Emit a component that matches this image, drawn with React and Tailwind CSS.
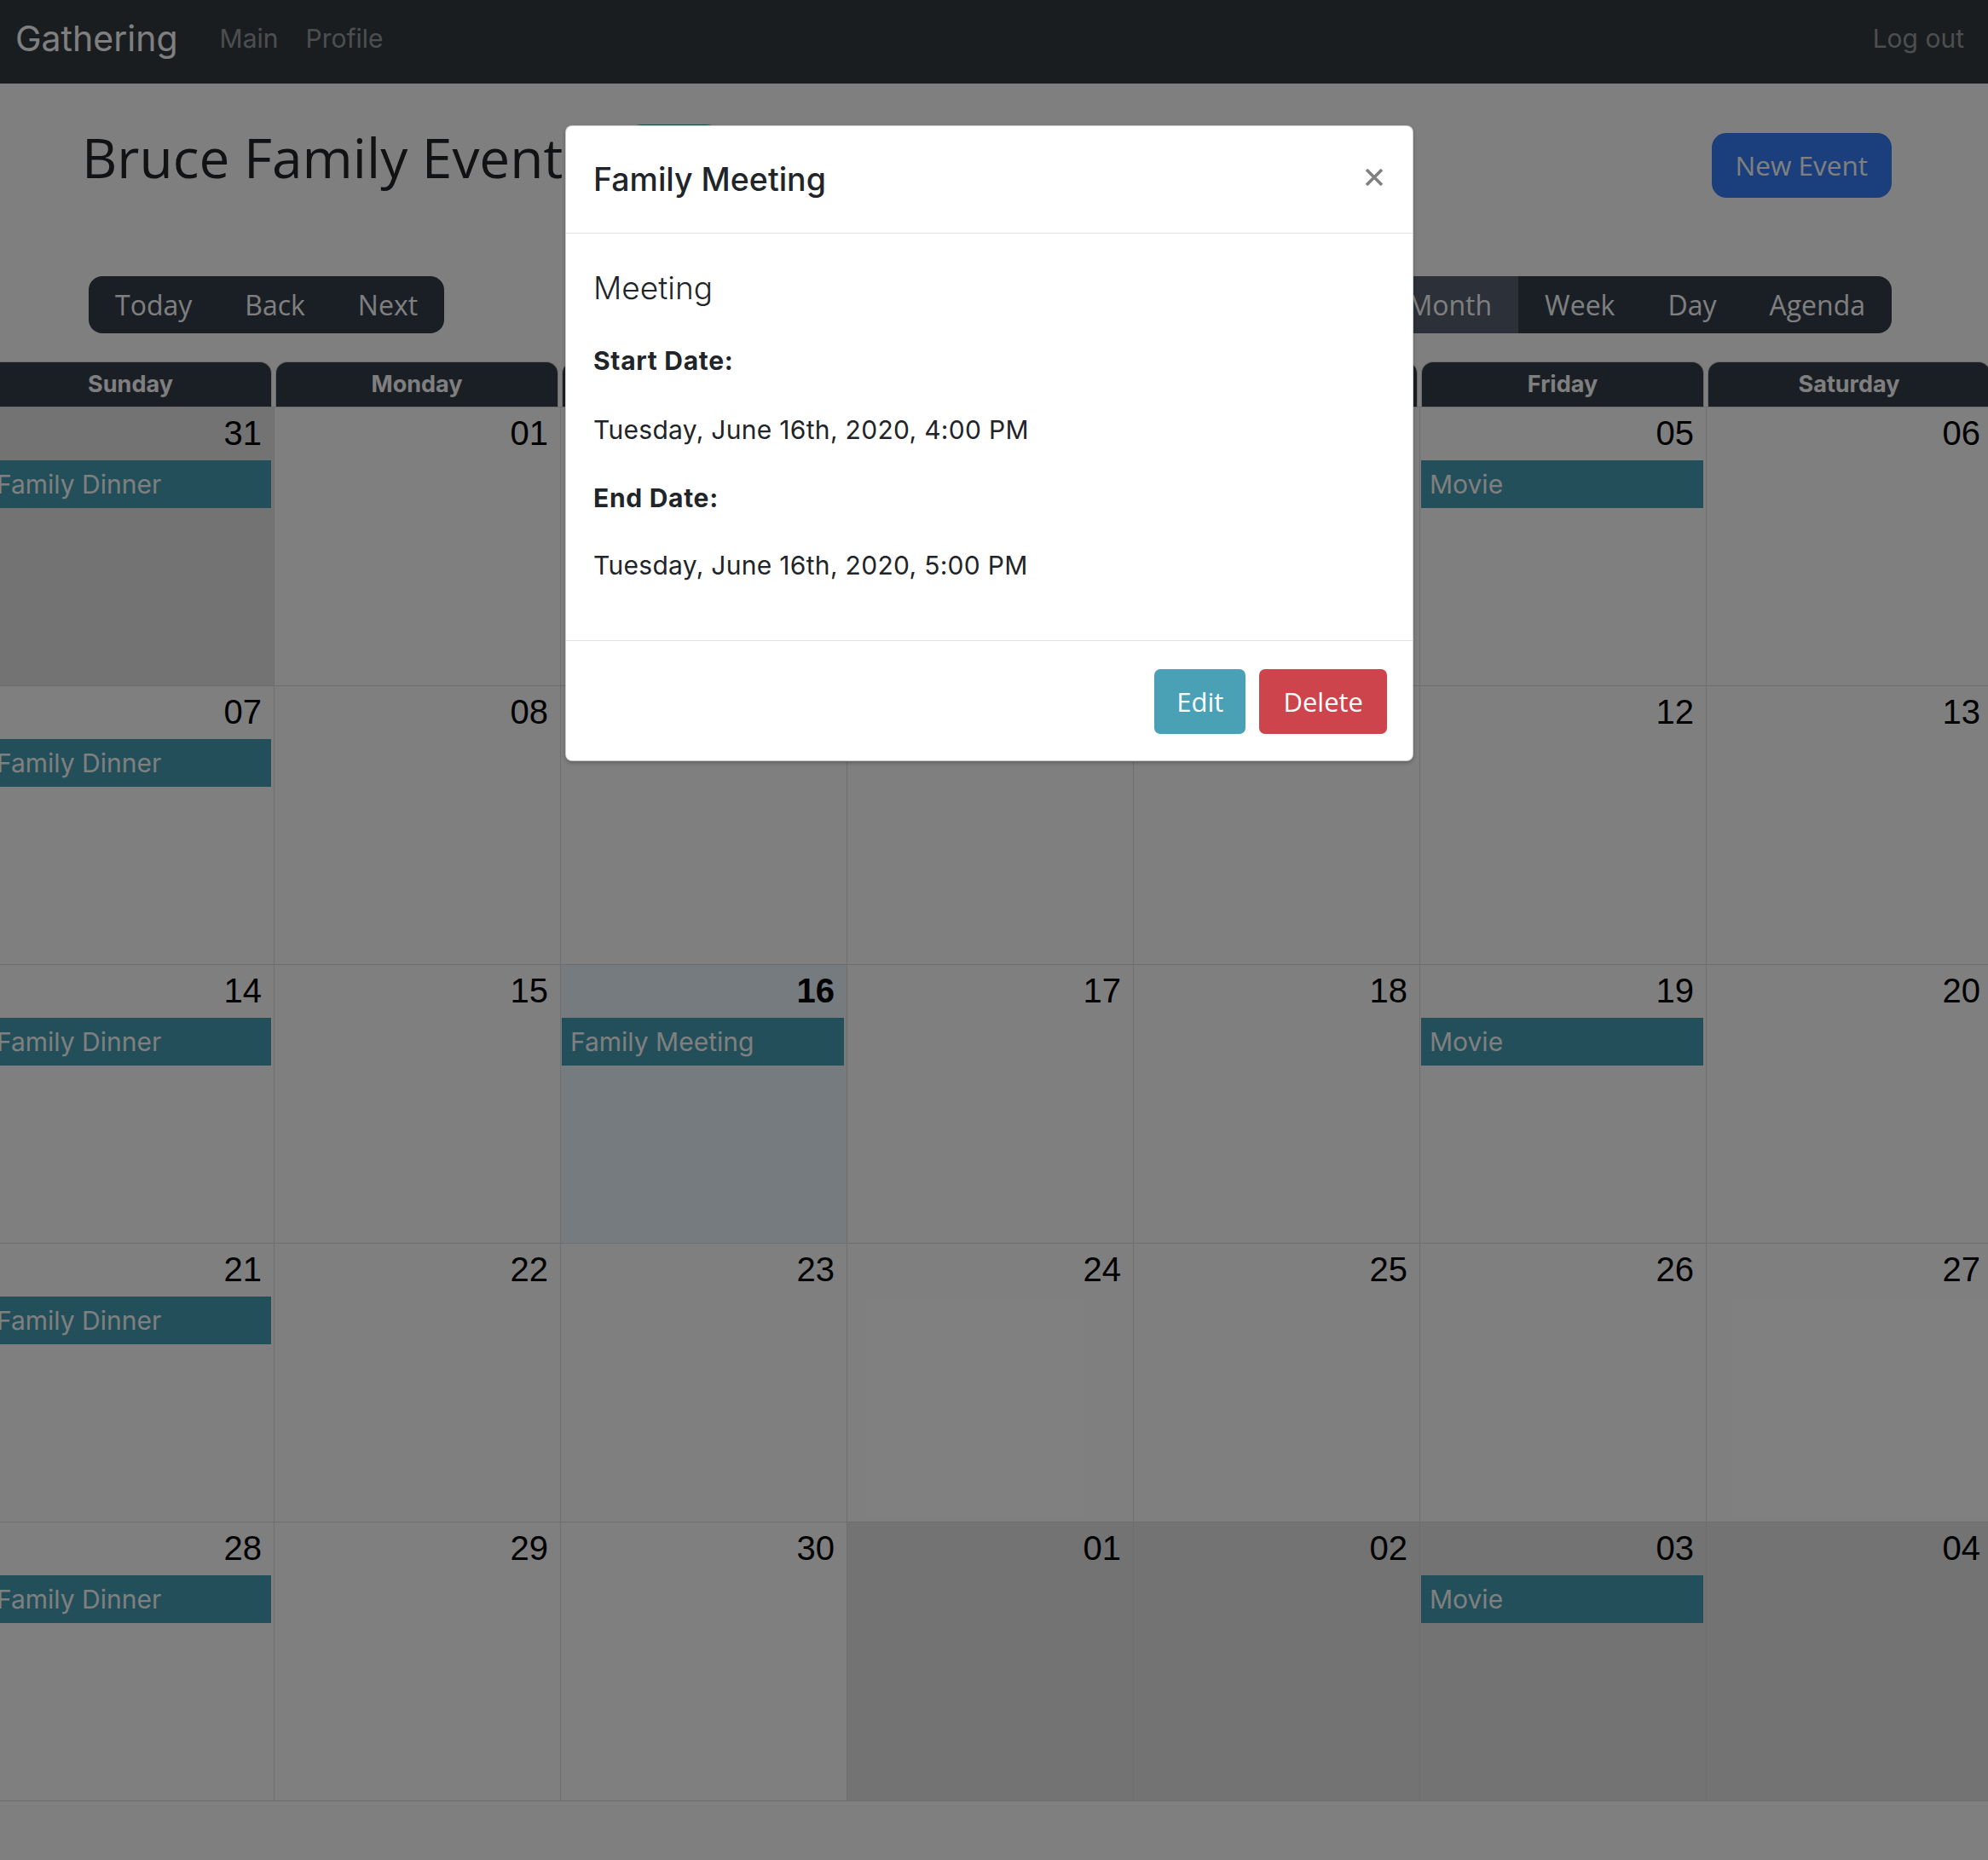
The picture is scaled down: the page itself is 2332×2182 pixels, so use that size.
import React from 'react';

const weeks = [
  [
    { d: '31', off: true, ev: 'Family Dinner' },
    { d: '01' }, { d: '02' }, { d: '03' }, { d: '04' },
    { d: '05', ev: 'Movie' },
    { d: '06' },
  ],
  [
    { d: '07', ev: 'Family Dinner' },
    { d: '08' }, { d: '09' }, { d: '10' }, { d: '11' }, { d: '12' }, { d: '13' },
  ],
  [
    { d: '14', ev: 'Family Dinner' },
    { d: '15' },
    { d: '16', today: true, ev: 'Family Meeting' },
    { d: '17' }, { d: '18' },
    { d: '19', ev: 'Movie' },
    { d: '20' },
  ],
  [
    { d: '21', ev: 'Family Dinner' },
    { d: '22' }, { d: '23' }, { d: '24' }, { d: '25' }, { d: '26' }, { d: '27' },
  ],
  [
    { d: '28', ev: 'Family Dinner' },
    { d: '29' }, { d: '30' },
    { d: '01', off: true }, { d: '02', off: true },
    { d: '03', off: true, ev: 'Movie' },
    { d: '04', off: true },
  ],
];

const days = ['Sunday', 'Monday', 'Tuesday', 'Wednesday', 'Thursday', 'Friday', 'Saturday'];

const ToolButton = ({ children, active }) => (
  <button
    className={`h-full px-[31px] text-[32px] text-white font-['Open_Sans',sans-serif] ${active ? 'bg-[#586070]' : ''}`}
  >
    {children}
  </button>
);

const DayCell = ({ cell, first }) => {
  let bg = '';
  if (cell.off) bg = 'bg-[#e6e6e6]';
  if (cell.today) bg = 'bg-[#eaf6ff]';
  return (
    <div className={`flex flex-col ${bg} ${first ? '' : 'border-l border-[#dddddd]'}`}>
      <div
        className={`pt-[10px] pr-[14px] text-right text-[40px] leading-none text-black font-['Liberation_Sans',Arial,sans-serif] ${cell.today ? 'font-bold' : ''}`}
      >
        {cell.d}
      </div>
      {cell.ev && (
        <div className="mt-[12px] ml-[1px] mr-[3px] h-[56px] bg-[#449eb2] pl-[10px] text-[30px] leading-[56px] text-white">
          {cell.ev}
        </div>
      )}
    </div>
  );
};

export default function App() {
  return (
    <div className="relative w-[2332px] h-[2182px] overflow-hidden bg-white font-['Inter',sans-serif]">
      {/* Navbar */}
      <nav className="flex h-[98px] items-center bg-[#343a40] pl-[18px] pr-[12px] pb-[8px]">
        <span className="mr-[33px] text-[41px] leading-none text-white">Gathering</span>
        <a className="px-[16px] text-[30px] leading-none text-white/50">Main</a>
        <a className="px-[16px] text-[30px] leading-none text-white/50">Profile</a>
        <a className="ml-auto px-[16px] text-[30px] leading-none text-white/50">Log out</a>
      </nav>

      {/* Page head */}
      <div className="pl-[104px] pr-[113px]">
        <div className="mt-[48px] flex items-start justify-between">
          <div className="flex items-start">
            <h1 className="-ml-[8px] mt-[1px] text-[64px] font-medium leading-[1.2] text-[#212529] font-['Open_Sans',sans-serif]">
              Bruce Family Events
            </h1>
            <div className="ml-[40px] h-[90px] w-[120px] rounded-[22px] bg-[#449eb2]" />
          </div>
          <button className="mt-[10px] h-[76px] rounded-[17px] bg-[#367ef8] px-[28px] text-[31.5px] text-white font-['Open_Sans',sans-serif]">
            New Event
          </button>
        </div>

        {/* Toolbar */}
        <div className="mt-[88px] flex items-center justify-between">
          <div className="flex h-[67px] overflow-hidden rounded-[16px] bg-[#343e4c]">
            <ToolButton>Today</ToolButton>
            <ToolButton>Back</ToolButton>
            <ToolButton>Next</ToolButton>
          </div>
          <span className="text-[32px] text-[#212529] font-['Open_Sans',sans-serif]">June 2020</span>
          <div className="flex h-[67px] overflow-hidden rounded-[16px] bg-[#343e4c]">
            <ToolButton active>Month</ToolButton>
            <ToolButton>Week</ToolButton>
            <ToolButton>Day</ToolButton>
            <ToolButton>Agenda</ToolButton>
          </div>
        </div>
      </div>

      {/* Calendar */}
      <div className="-ml-[15px] mt-[33px] w-[2352px]">
        <div className="grid h-[53px] grid-cols-7">
          {days.map((d) => (
            <div key={d} className="px-[2px]">
              <div className="flex h-full items-center justify-center rounded-t-[14px] border border-b-0 border-[#dddddd] bg-[#343e4c] text-[27px] font-bold text-white">
                {d}
              </div>
            </div>
          ))}
        </div>
        <div className="border-b border-[#dddddd]">
          {weeks.map((row, i) => (
            <div key={i} className="grid h-[327px] grid-cols-7 border-t border-[#dddddd]">
              {row.map((cell, j) => (
                <DayCell key={j} cell={cell} first={j === 0} />
              ))}
            </div>
          ))}
        </div>
      </div>

      {/* Modal backdrop */}
      <div className="absolute inset-0 bg-black/50" />

      {/* Modal */}
      <div className="absolute left-[663px] top-[147px] w-[995px] overflow-hidden rounded-[8px] border border-black/20 bg-white shadow-[0_2px_4px_rgba(0,0,0,0.25)]">
        <div className="flex h-[126px] items-center justify-between border-b border-[#dee2e6] pl-[32px] pr-[34px]">
          <h5 className="text-[37.5px] font-medium leading-none text-[#212529]">Family Meeting</h5>
          <svg width="22" height="22" viewBox="0 0 22 22" className="mb-[6px]">
            <path d="M2 2 L20 20 M20 2 L2 20" stroke="#808080" strokeWidth="3.6" strokeLinecap="butt" />
          </svg>
        </div>
        <div className="px-[32px] pt-[36px] pb-[66px] text-[30px] tracking-[0.3px] text-[#212529]">
          <p className="text-[37px] font-light leading-[55px] tracking-normal">Meeting</p>
          <p className="mt-[36px] font-bold leading-[44px] tracking-[0.7px]">Start Date:</p>
          <p className="mt-[37px] leading-[44px]">Tuesday, June 16th, 2020, 4:00 PM</p>
          <p className="mt-[36px] font-bold leading-[44px] tracking-[0.7px]">End Date:</p>
          <p className="mt-[35px] leading-[44px]">Tuesday, June 16th, 2020, 5:00 PM</p>
        </div>
        <div className="flex justify-end gap-[16px] border-t border-[#dee2e6] pt-[33px] pb-[31px] pr-[30px]">
          <button className="h-[76px] rounded-[7px] bg-[#4aa1b6] px-[26px] text-[31px] text-white font-['Open_Sans',sans-serif]">
            Edit
          </button>
          <button className="h-[76px] rounded-[7px] bg-[#cd444d] px-[28px] text-[31px] text-white font-['Open_Sans',sans-serif]">
            Delete
          </button>
        </div>
      </div>
    </div>
  );
}
